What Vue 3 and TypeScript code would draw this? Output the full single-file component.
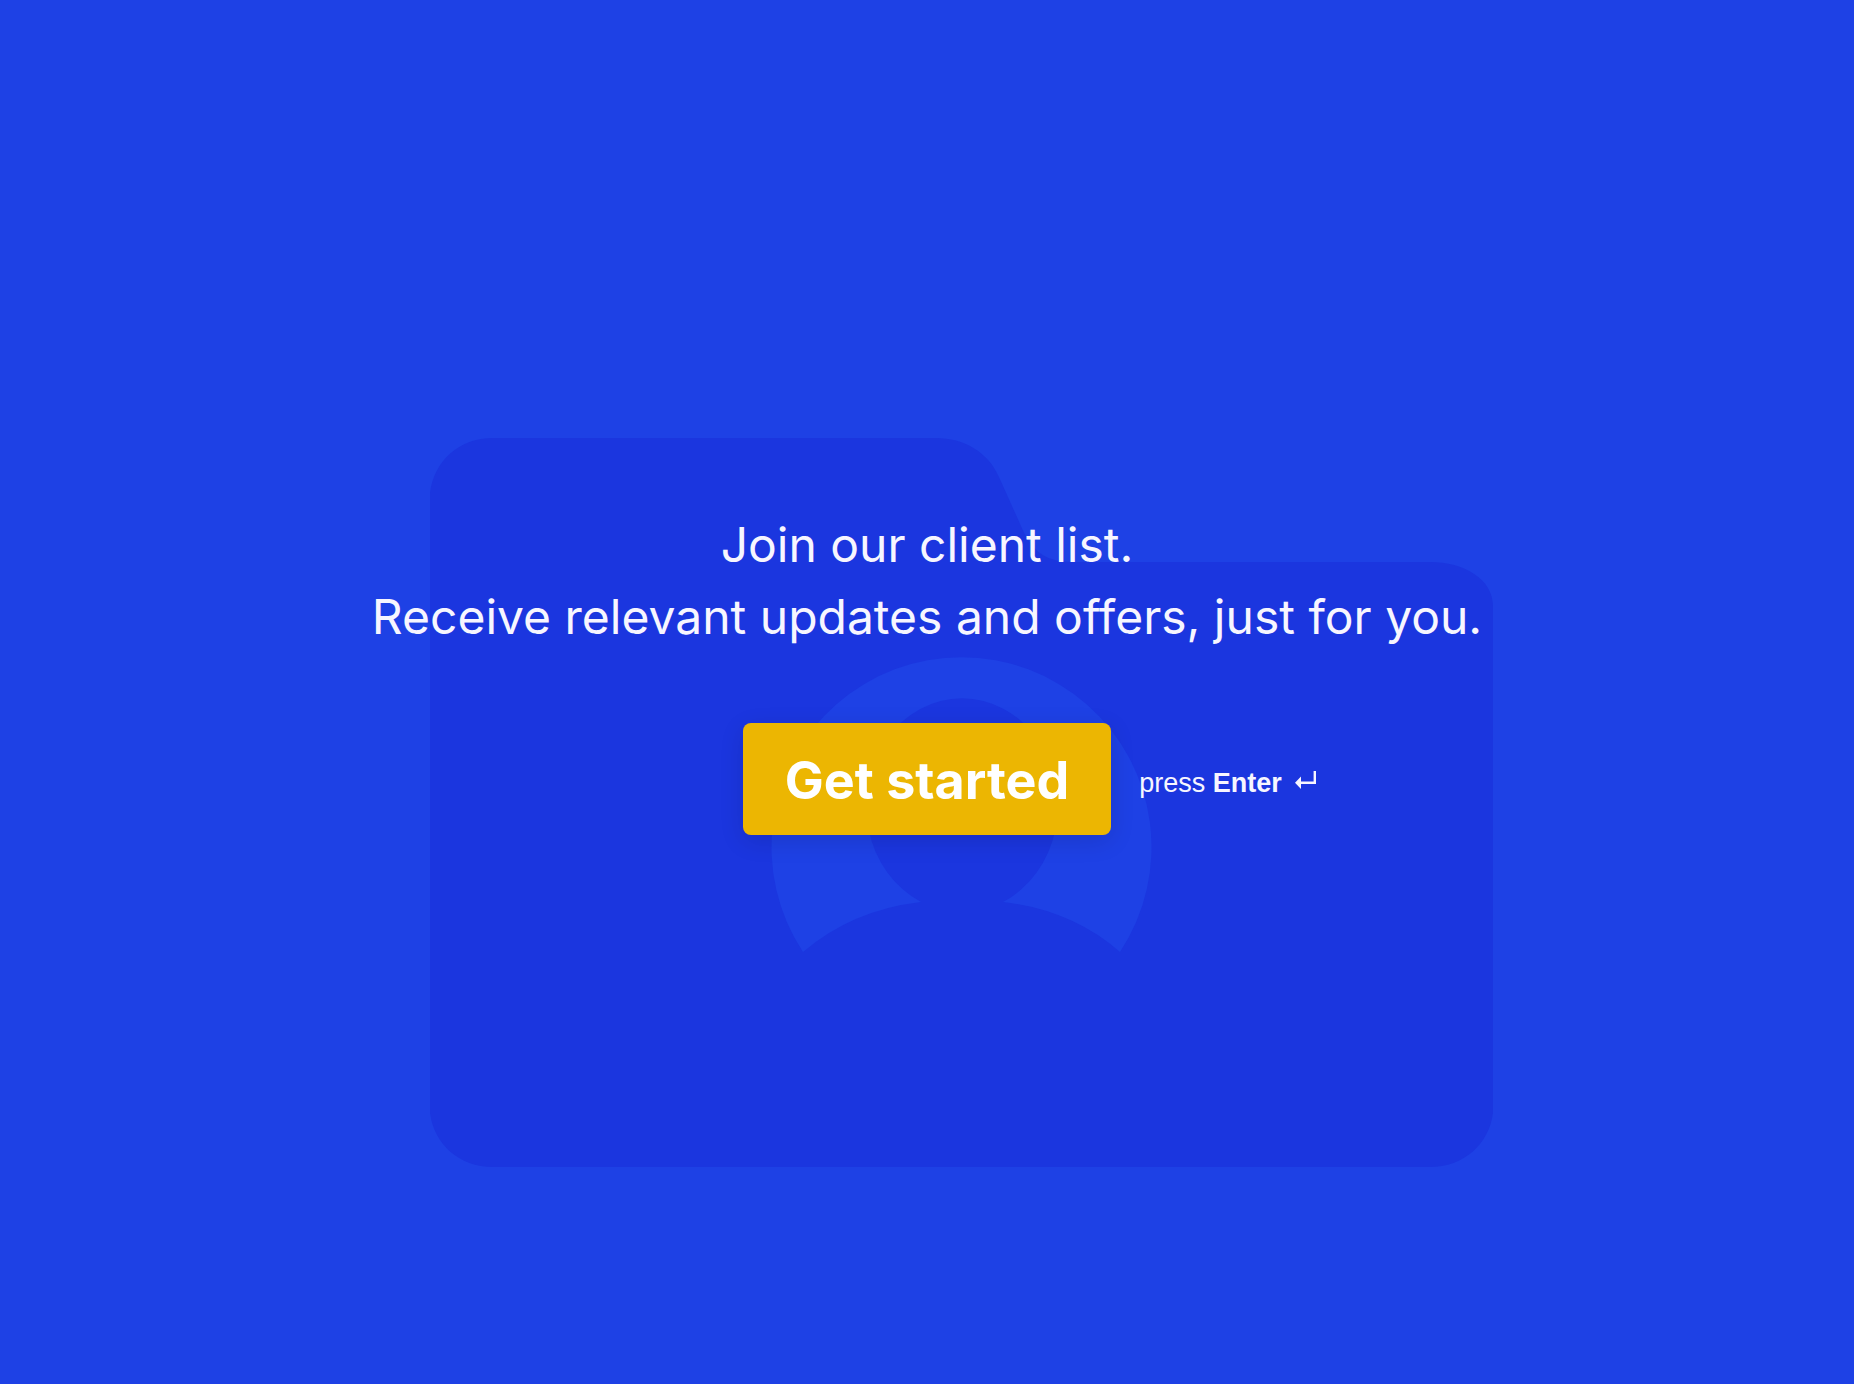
<script setup lang="ts">
const emit = defineEmits<{ start: [] }>()

const headline: string[] = [
  'Join our client list.',
  'Receive relevant updates and offers, just for you.',
]

function start(): void {
  emit('start')
}
</script>

<template>
  <main class="welcome" @keydown.enter="start">
    <svg class="backdrop" viewBox="0 0 1854 1384" preserveAspectRatio="xMidYMid slice" aria-hidden="true">
      <path
        class="folder"
        d="M493 438H936C964 438 988 452 999 477L1021 526C1030 547 1042 562 1072 562H1430C1464 562 1493 579 1493 606V1113C1489 1144 1464 1167 1430 1167H493C459 1167 434 1144 430 1113V493C434 461 459 438 493 438Z"
      />
      <path
        class="badge"
        fill-rule="evenodd"
        d="M803 952A190 190 0 1 1 1120 952Q1072 910 1003 902A96 107 0 1 0 921 902Q852 910 803 952Z"
      />
    </svg>

    <section class="content">
      <h1 class="headline">
        <span v-for="line in headline" :key="line" class="line">{{ line }}</span>
      </h1>
      <div class="actions">
        <button class="start" type="button" @click="start">Get started</button>
        <p class="hint">
          <span>press <strong>Enter</strong></span>
          <svg class="return" viewBox="0 0 22 20" aria-hidden="true">
            <path d="M19.6 1H22V14H7V19L1 12.8L7 6.6V11.6H19.6Z" />
          </svg>
        </p>
      </div>
    </section>
  </main>
</template>

<style>
body {
  margin: 0;
  background: #1e41e5;
}
</style>

<style scoped>
.welcome {
  position: relative;
  display: flex;
  align-items: center;
  justify-content: center;
  box-sizing: border-box;
  min-height: 100vh;
  padding: 0 24px 40px;
  overflow: hidden;
  background: #1e41e5;
  color: #f7f6ff;
  font-family: Inter, "Liberation Sans", sans-serif;
}

.backdrop {
  position: absolute;
  inset: 0;
  width: 100%;
  height: 100%;
}

.folder {
  fill: #1b36df;
}

.badge {
  fill: #1e41e5;
}

.content {
  position: relative;
  display: flex;
  flex-direction: column;
  gap: 70px;
  width: 100%;
}

.headline {
  margin: 0;
  font-size: 48px;
  font-weight: 400;
  line-height: 72px;
  text-align: center;
}

.line {
  display: block;
}

.actions {
  display: grid;
  grid-template-columns: 1fr auto 1fr;
  align-items: center;
  column-gap: 28px;
}

.start {
  grid-column: 2;
  height: 112px;
  padding: 4px 42px 0;
  border: 0;
  border-radius: 8px;
  background: #ecb602;
  box-shadow: 0 6px 24px rgba(0, 0, 0, 0.12);
  color: #fff;
  font-family: inherit;
  font-size: 52px;
  font-weight: 700;
  line-height: 72px;
  cursor: pointer;
}

.hint {
  display: flex;
  align-items: center;
  gap: 12px;
  margin: 8px 0 0;
  font-family: "Liberation Sans", Arial, sans-serif;
  font-size: 27px;
  line-height: 32px;
  white-space: nowrap;
}

.return {
  width: 22px;
  height: 20px;
  margin-bottom: 6px;
  fill: currentColor;
}
</style>
